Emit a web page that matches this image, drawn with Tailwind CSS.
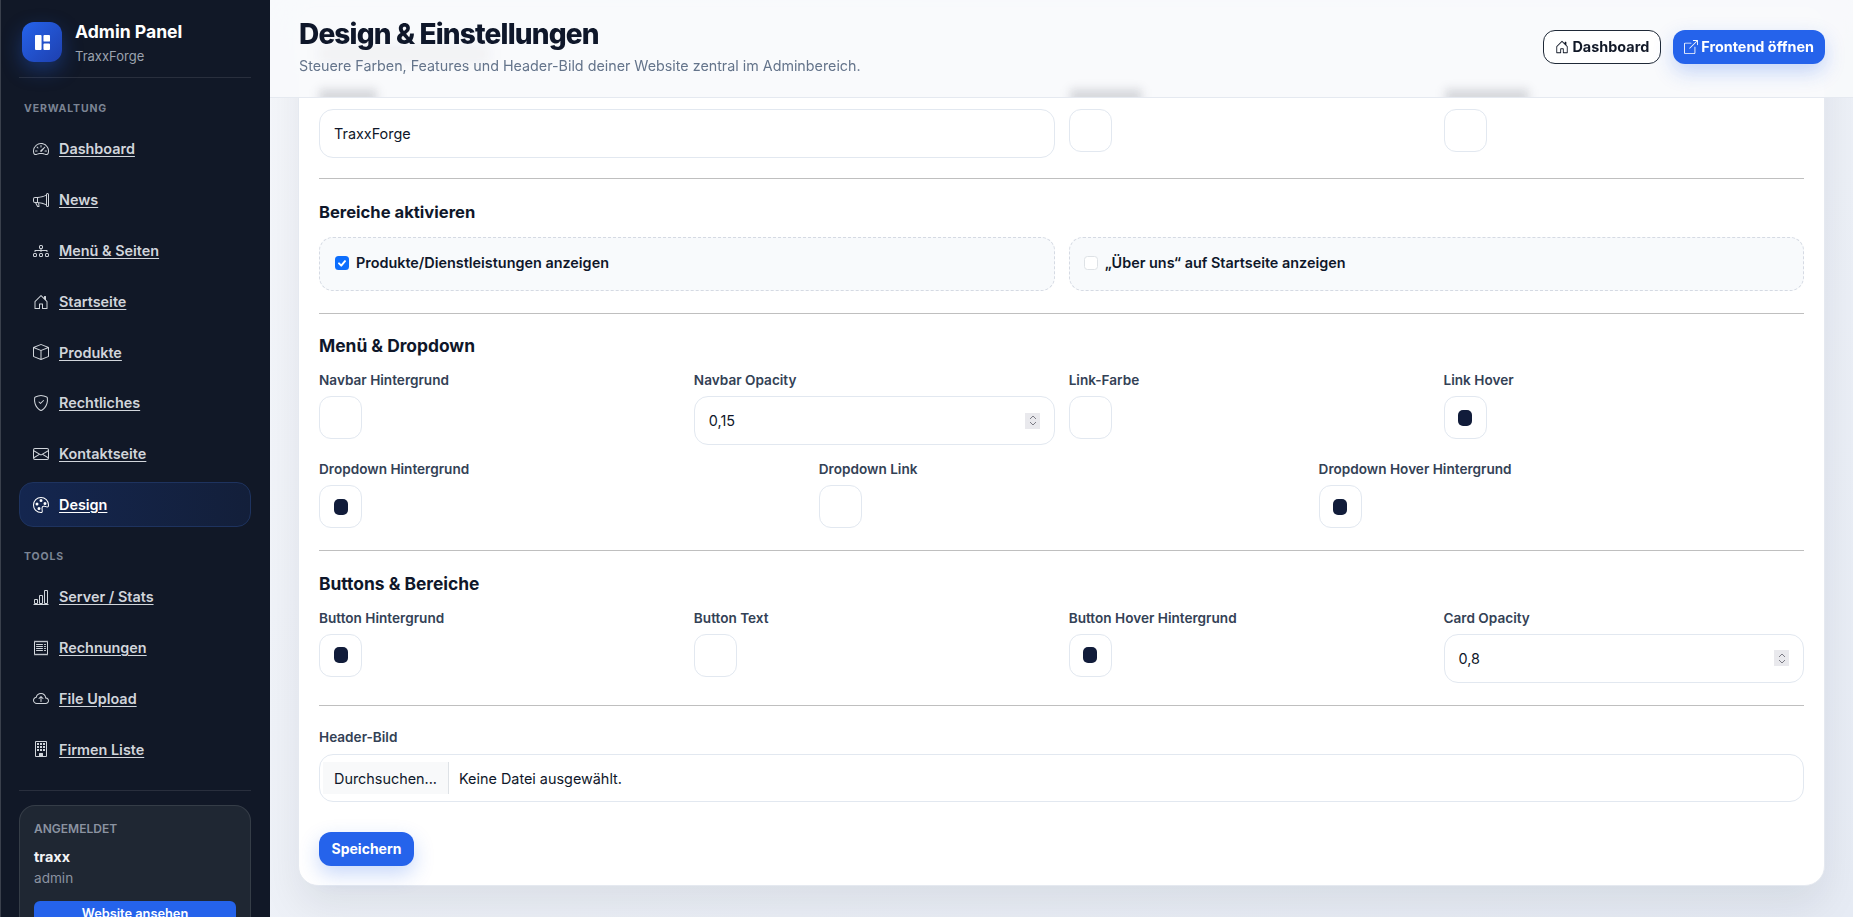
<!DOCTYPE html>
<html lang="de">
  <head>
    <meta charset="UTF-8" />
    <title>Design &amp; Einstellungen</title>
    <script src="https://cdn.jsdelivr.net/npm/@tailwindcss/browser@4"></script>
  </head>
  <body class="h-screen overflow-hidden flex bg-[#eef1f7] font-['Inter',sans-serif] text-[#0f172a]">
    <!-- Sidebar -->
    <aside class="w-[270px] shrink-0 h-screen overflow-hidden bg-[#111827] border-l border-l-[#3a404c] pl-[18px] pr-[19px] pt-[22px]">
      <div class="flex items-start gap-[13px] pl-[3px] h-[56px] border-b border-white/10">
        <div class="w-10 h-10 rounded-[12px] bg-gradient-to-br from-[#2563eb] to-[#1e40af] shadow-[0_8px_20px_rgba(37,99,235,0.35)] flex items-center justify-center text-white">
          <svg class="w-[15px] h-[15px]" viewBox="0 0 16 16" fill="currentColor"><path d="M0 1a1 1 0 0 1 1-1h5a1 1 0 0 1 1 1v14a1 1 0 0 1-1 1H1a1 1 0 0 1-1-1zm9 0a1 1 0 0 1 1-1h5a1 1 0 0 1 1 1v5a1 1 0 0 1-1 1h-5a1 1 0 0 1-1-1zm0 9a1 1 0 0 1 1-1h5a1 1 0 0 1 1 1v5a1 1 0 0 1-1 1h-5a1 1 0 0 1-1-1z"/></svg>
        </div>
        <div>
          <div class="text-[17.6px] leading-[20px] font-bold text-white">Admin Panel</div>
          <div class="text-[13px] leading-[16px] mt-[6px] text-[#9ca3af]">TraxxForge</div>
        </div>
      </div>

      <div class="mt-[23px] pl-[5px] text-[10.5px] leading-[16px] font-bold tracking-[0.08em] text-[#7b8494]">VERWALTUNG</div>
      <nav class="mt-[9.8px] flex flex-col gap-[6px] text-[14.4px] font-semibold text-[#d1d5db]">
        <a href="#" class="flex items-center gap-[10px] h-[44.8px] pl-[14px] underline underline-offset-2">
          <svg class="w-4 h-4 shrink-0" viewBox="0 0 16 16" fill="currentColor"><path d="M8 4a.5.5 0 0 1 .5.5V6a.5.5 0 0 1-1 0V4.5A.5.5 0 0 1 8 4M3.732 5.732a.5.5 0 0 1 .707 0l.915.914a.5.5 0 1 1-.708.708l-.914-.915a.5.5 0 0 1 0-.707M2 10a.5.5 0 0 1 .5-.5h1.586a.5.5 0 0 1 0 1H2.5A.5.5 0 0 1 2 10m9.5 0a.5.5 0 0 1 .5-.5h1.5a.5.5 0 0 1 0 1H12a.5.5 0 0 1-.5-.5m.754-4.246a.39.39 0 0 0-.527-.02L7.547 9.31a.91.91 0 1 0 1.302 1.258l3.434-4.297a.39.39 0 0 0-.029-.518z"/><path fill-rule="evenodd" d="M0 10a8 8 0 1 1 15.547 2.661c-.442 1.253-1.845 1.602-2.932 1.25C11.309 13.488 9.475 13 8 13c-1.474 0-3.31.488-4.615.911-1.087.352-2.49.003-2.932-1.25A8 8 0 0 1 0 10m8-7a7 7 0 0 0-6.603 9.329c.203.575.923.876 1.68.63C4.397 12.533 6.358 12 8 12s3.604.532 4.923.96c.757.245 1.477-.056 1.68-.631A7 7 0 0 0 8 3"/></svg>
          Dashboard
        </a>
        <a href="#" class="flex items-center gap-[10px] h-[44.8px] pl-[14px] underline underline-offset-2">
          <svg class="w-4 h-4 shrink-0" viewBox="0 0 16 16" fill="currentColor"><path d="M13 2.5a1.5 1.5 0 0 1 3 0v11a1.5 1.5 0 0 1-3 0v-.214c-2.162-1.241-4.49-1.843-6.912-2.083l.405 2.712A1 1 0 0 1 5.51 15.1h-.548a1 1 0 0 1-.916-.599l-1.85-3.49-.202-.003A2.014 2.014 0 0 1 0 9V7a2.02 2.02 0 0 1 1.992-2.013 75 75 0 0 0 2.483-.075c3.043-.154 6.148-.849 8.525-2.199zm1 0v11a.5.5 0 0 0 1 0v-11a.5.5 0 0 0-1 0m-1 1.35c-2.344 1.205-5.209 1.842-8 2.033v4.233q.27.015.537.036c2.568.189 5.093.744 7.463 1.993zm-9 6.215v-4.13a95 95 0 0 1-1.992.052A1.02 1.02 0 0 0 1 7v2c0 .55.448 1.002 1.006 1.009A61 61 0 0 1 4 10.065m-.657.975 1.609 3.037.01.024h.548l-.002-.014-.443-2.966a68 68 0 0 0-1.722-.082z"/></svg>
          News
        </a>
        <a href="#" class="flex items-center gap-[10px] h-[44.8px] pl-[14px] underline underline-offset-2">
          <svg class="w-4 h-4 shrink-0" viewBox="0 0 16 16" fill="currentColor"><path fill-rule="evenodd" d="M6 3.5A1.5 1.5 0 0 1 7.5 2h1A1.5 1.5 0 0 1 10 3.5v1A1.5 1.5 0 0 1 8.5 6v1H14a.5.5 0 0 1 .5.5v1a.5.5 0 0 1-1 0V8h-5v.5a.5.5 0 0 1-1 0V8h-5v.5a.5.5 0 0 1-1 0v-1A.5.5 0 0 1 2 7h5.5V6A1.5 1.5 0 0 1 6 4.5zM8.5 5a.5.5 0 0 0 .5-.5v-1a.5.5 0 0 0-.5-.5h-1a.5.5 0 0 0-.5.5v1a.5.5 0 0 0 .5.5zM0 11.5A1.5 1.5 0 0 1 1.5 10h1A1.5 1.5 0 0 1 4 11.5v1A1.5 1.5 0 0 1 2.5 14h-1A1.5 1.5 0 0 1 0 12.5zm1.5-.5a.5.5 0 0 0-.5.5v1a.5.5 0 0 0 .5.5h1a.5.5 0 0 0 .5-.5v-1a.5.5 0 0 0-.5-.5zm4.5.5A1.5 1.5 0 0 1 7.5 10h1a1.5 1.5 0 0 1 1.5 1.5v1A1.5 1.5 0 0 1 8.5 14h-1A1.5 1.5 0 0 1 6 12.5zm1.5-.5a.5.5 0 0 0-.5.5v1a.5.5 0 0 0 .5.5h1a.5.5 0 0 0 .5-.5v-1a.5.5 0 0 0-.5-.5zm4.5.5a1.5 1.5 0 0 1 1.5-1.5h1a1.5 1.5 0 0 1 1.5 1.5v1a1.5 1.5 0 0 1-1.5 1.5h-1a1.5 1.5 0 0 1-1.5-1.5zm1.5-.5a.5.5 0 0 0-.5.5v1a.5.5 0 0 0 .5.5h1a.5.5 0 0 0 .5-.5v-1a.5.5 0 0 0-.5-.5z"/></svg>
          Menü &amp; Seiten
        </a>
        <a href="#" class="flex items-center gap-[10px] h-[44.8px] pl-[14px] underline underline-offset-2">
          <svg class="w-4 h-4 shrink-0" viewBox="0 0 16 16" fill="currentColor"><path d="M8.354 1.146a.5.5 0 0 0-.708 0l-6 6A.5.5 0 0 0 1.5 7.5v7a.5.5 0 0 0 .5.5h4.5a.5.5 0 0 0 .5-.5v-4h2v4a.5.5 0 0 0 .5.5H14a.5.5 0 0 0 .5-.5v-7a.5.5 0 0 0-.146-.354L13 5.793V2.5a.5.5 0 0 0-.5-.5h-1a.5.5 0 0 0-.5.5v1.293zM2.5 14V7.707l5.5-5.5 5.5 5.5V14H10v-4a.5.5 0 0 0-.5-.5h-3a.5.5 0 0 0-.5.5v4z"/></svg>
          Startseite
        </a>
        <a href="#" class="flex items-center gap-[10px] h-[44.8px] pl-[14px] underline underline-offset-2">
          <svg class="w-4 h-4 shrink-0" viewBox="0 0 16 16" fill="currentColor"><path d="M8.186 1.113a.5.5 0 0 0-.372 0L1.846 3.5 8 5.961 14.154 3.5zM15 4.239l-6.5 2.6v7.922l6.5-2.6V4.24zM7.5 14.762V6.838L1 4.239v7.925zM7.443.184a1.5 1.5 0 0 1 1.114 0l7.129 2.852A.5.5 0 0 1 16 3.5v8.662a1 1 0 0 1-.629.928l-7.185 2.874a.5.5 0 0 1-.372 0L.63 13.09a1 1 0 0 1-.63-.928V3.5a.5.5 0 0 1 .314-.464z"/></svg>
          Produkte
        </a>
        <a href="#" class="flex items-center gap-[10px] h-[44.8px] pl-[14px] underline underline-offset-2">
          <svg class="w-4 h-4 shrink-0" viewBox="0 0 16 16" fill="currentColor"><path d="M5.338 1.59a61 61 0 0 0-2.837.856.48.48 0 0 0-.328.39c-.554 4.157.726 7.19 2.253 9.188a10.7 10.7 0 0 0 2.287 2.233c.346.244.652.42.893.533q.18.085.293.118a1 1 0 0 0 .101.025 1 1 0 0 0 .1-.025q.114-.034.294-.118c.24-.113.547-.29.893-.533a10.7 10.7 0 0 0 2.287-2.233c1.527-1.997 2.807-5.031 2.253-9.188a.48.48 0 0 0-.328-.39c-.651-.213-1.75-.56-2.837-.855C9.552 1.29 8.531 1.067 8 1.067c-.53 0-1.552.223-2.662.524zM5.072.56C6.157.265 7.31 0 8 0s1.843.265 2.928.56c1.11.3 2.229.655 2.887.87a1.54 1.54 0 0 1 1.044 1.262c.596 4.477-.787 7.795-2.465 9.99a11.8 11.8 0 0 1-2.517 2.453 7 7 0 0 1-1.048.625c-.28.132-.581.24-.829.24s-.548-.108-.829-.24a7 7 0 0 1-1.048-.625 11.8 11.8 0 0 1-2.517-2.453C1.928 10.487.545 7.169 1.141 2.692A1.54 1.54 0 0 1 2.185 1.43 63 63 0 0 1 5.072.56"/><path d="M10.854 5.146a.5.5 0 0 1 0 .708l-3 3a.5.5 0 0 1-.708 0l-1.5-1.5a.5.5 0 1 1 .708-.708L7.5 7.793l2.646-2.647a.5.5 0 0 1 .708 0"/></svg>
          Rechtliches
        </a>
        <a href="#" class="flex items-center gap-[10px] h-[44.8px] pl-[14px] underline underline-offset-2">
          <svg class="w-4 h-4 shrink-0" viewBox="0 0 16 16" fill="currentColor"><path d="M0 4a2 2 0 0 1 2-2h12a2 2 0 0 1 2 2v8a2 2 0 0 1-2 2H2a2 2 0 0 1-2-2zm2-1a1 1 0 0 0-1 1v.217l7 4.2 7-4.2V4a1 1 0 0 0-1-1zm13 2.383-4.708 2.825L15 11.105zm-.034 6.876-5.64-3.471L8 9.583l-1.326-.795-5.64 3.47A1 1 0 0 0 2 13h12a1 1 0 0 0 .966-.741M1 11.105l4.708-2.897L1 5.383z"/></svg>
          Kontaktseite
        </a>
        <a href="#" class="flex items-center gap-[10px] h-[44.8px] pl-[13px] underline underline-offset-2 text-white rounded-[14px] border border-[#1e335f] bg-gradient-to-r from-[#14264f] to-[#131f3a]">
          <svg class="w-4 h-4 shrink-0" viewBox="0 0 16 16" fill="currentColor"><path d="M8 5a1.5 1.5 0 1 0 0-3 1.5 1.5 0 0 0 0 3m4 3a1.5 1.5 0 1 0 0-3 1.5 1.5 0 0 0 0 3M5.5 7a1.5 1.5 0 1 1-3 0 1.5 1.5 0 0 1 3 0m.5 6a1.5 1.5 0 1 0 0-3 1.5 1.5 0 0 0 0 3"/><path d="M16 8c0 3.15-1.866 2.585-3.567 2.07C11.42 9.763 10.465 9.473 10 10c-.603.683-.475 1.819-.351 2.92C9.826 14.495 9.996 16 8 16a8 8 0 1 1 8-8m-8 7c.611 0 .654-.171.655-.176.078-.146.124-.464.07-1.119-.014-.168-.037-.37-.061-.591-.052-.464-.112-1.005-.118-1.462-.01-.707.083-1.61.704-2.314.369-.417.845-.578 1.272-.618.404-.038.812.026 1.16.104.343.077.702.186 1.025.284l.028.008c.346.105.658.199.953.266.653.148.904.083.991.024C14.717 9.38 15 9.161 15 8a7 7 0 1 0-7 7"/></svg>
          Design
        </a>
      </nav>

      <div class="mt-[21.5px] pl-[5px] text-[10.5px] leading-[16px] font-bold tracking-[0.08em] text-[#7b8494]">TOOLS</div>
      <nav class="mt-[10px] flex flex-col gap-[6px] text-[14.4px] font-semibold text-[#d1d5db]">
        <a href="#" class="flex items-center gap-[10px] h-[44.8px] pl-[14px] underline underline-offset-2">
          <svg class="w-4 h-4 shrink-0" viewBox="0 0 16 16" fill="currentColor"><path d="M4 11H2v3h2zm5-4H7v7h2zm5-5v12h-2V2zm-2-1a1 1 0 0 0-1 1v12a1 1 0 0 0 1 1h2a1 1 0 0 0 1-1V2a1 1 0 0 0-1-1zM6 7a1 1 0 0 1 1-1h2a1 1 0 0 1 1 1v7a1 1 0 0 1-1 1H7a1 1 0 0 1-1-1zm-5 4a1 1 0 0 1 1-1h2a1 1 0 0 1 1 1v3a1 1 0 0 1-1 1H2a1 1 0 0 1-1-1z"/><path d="M.5 15h15v1H.5z"/></svg>
          Server / Stats
        </a>
        <a href="#" class="flex items-center gap-[10px] h-[44.8px] pl-[14px] underline underline-offset-2">
          <svg class="w-4 h-4 shrink-0" viewBox="0 0 16 16" fill="currentColor"><path d="M1.92.506a.5.5 0 0 1 .434.14L3 1.293l.646-.647a.5.5 0 0 1 .708 0L5 1.293l.646-.647a.5.5 0 0 1 .708 0L7 1.293l.646-.647a.5.5 0 0 1 .708 0L9 1.293l.646-.647a.5.5 0 0 1 .708 0l.646.647.646-.647a.5.5 0 0 1 .708 0l.646.647.646-.647a.5.5 0 0 1 .801.13l.5 1A.5.5 0 0 1 15 2v12a.5.5 0 0 1-.053.224l-.5 1a.5.5 0 0 1-.8.13L13 14.707l-.646.647a.5.5 0 0 1-.708 0L11 14.707l-.646.647a.5.5 0 0 1-.708 0L9 14.707l-.646.647a.5.5 0 0 1-.708 0L7 14.707l-.646.647a.5.5 0 0 1-.708 0L5 14.707l-.646.647a.5.5 0 0 1-.708 0L3 14.707l-.646.647a.5.5 0 0 1-.801-.13l-.5-1A.5.5 0 0 1 1 14V2a.5.5 0 0 1 .053-.224l.5-1a.5.5 0 0 1 .367-.27m.217 1.338L2 2.118v11.764l.137.274.51-.51a.5.5 0 0 1 .707 0l.646.647.646-.646a.5.5 0 0 1 .708 0l.646.646.646-.646a.5.5 0 0 1 .708 0l.646.646.646-.646a.5.5 0 0 1 .708 0l.646.646.646-.646a.5.5 0 0 1 .708 0l.646.646.646-.646a.5.5 0 0 1 .708 0l.509.509.137-.274V2.118l-.137-.274-.51.51a.5.5 0 0 1-.707 0L12 1.707l-.646.647a.5.5 0 0 1-.708 0L10 1.707l-.646.647a.5.5 0 0 1-.708 0L8 1.707l-.646.647a.5.5 0 0 1-.708 0L6 1.707l-.646.647a.5.5 0 0 1-.708 0L4 1.707l-.646.647a.5.5 0 0 1-.708 0z"/><path d="M3 4.5a.5.5 0 0 1 .5-.5h6a.5.5 0 1 1 0 1h-6a.5.5 0 0 1-.5-.5m0 2a.5.5 0 0 1 .5-.5h6a.5.5 0 1 1 0 1h-6a.5.5 0 0 1-.5-.5m0 2a.5.5 0 0 1 .5-.5h6a.5.5 0 1 1 0 1h-6a.5.5 0 0 1-.5-.5m0 2a.5.5 0 0 1 .5-.5h6a.5.5 0 0 1 0 1h-6a.5.5 0 0 1-.5-.5m8-6a.5.5 0 0 1 .5-.5h1a.5.5 0 0 1 0 1h-1a.5.5 0 0 1-.5-.5m0 2a.5.5 0 0 1 .5-.5h1a.5.5 0 0 1 0 1h-1a.5.5 0 0 1-.5-.5m0 2a.5.5 0 0 1 .5-.5h1a.5.5 0 0 1 0 1h-1a.5.5 0 0 1-.5-.5m0 2a.5.5 0 0 1 .5-.5h1a.5.5 0 0 1 0 1h-1a.5.5 0 0 1-.5-.5"/></svg>
          Rechnungen
        </a>
        <a href="#" class="flex items-center gap-[10px] h-[44.8px] pl-[14px] underline underline-offset-2">
          <svg class="w-4 h-4 shrink-0" viewBox="0 0 16 16" fill="currentColor"><path fill-rule="evenodd" d="M7.646 5.146a.5.5 0 0 1 .708 0l2 2a.5.5 0 0 1-.708.708L8.5 6.707V10.5a.5.5 0 0 1-1 0V6.707L6.354 7.854a.5.5 0 1 1-.708-.708z"/><path d="M4.406 3.342A5.53 5.53 0 0 1 8 2c2.69 0 4.923 2 5.166 4.579C14.758 6.804 16 8.137 16 9.773 16 11.569 14.502 13 12.687 13H3.781C1.708 13 0 11.366 0 9.318c0-1.763 1.266-3.223 2.942-3.593.143-.863.698-1.723 1.464-2.383m.653.757c-.757.653-1.153 1.44-1.153 2.056v.448l-.445.049C2.064 6.805 1 7.952 1 9.318 1 10.785 2.23 12 3.781 12h8.906C13.98 12 15 10.988 15 9.773c0-1.216-1.02-2.228-2.313-2.228h-.5v-.5C12.188 4.825 10.328 3 8 3a4.53 4.53 0 0 0-2.941 1.1z"/></svg>
          File Upload
        </a>
        <a href="#" class="flex items-center gap-[10px] h-[44.8px] pl-[14px] underline underline-offset-2">
          <svg class="w-4 h-4 shrink-0" viewBox="0 0 16 16" fill="currentColor"><path d="M2 1a1 1 0 0 1 1-1h10a1 1 0 0 1 1 1v14a1 1 0 0 1-1 1H3a1 1 0 0 1-1-1zm11 0H3v14h3v-2.5a.5.5 0 0 1 .5-.5h3a.5.5 0 0 1 .5.5V15h3z"/><path d="M4 2h2v2H4zm3 0h2v2H7zm3 0h2v2h-2zM4 5h2v2H4zm3 0h2v2H7zm3 0h2v2h-2zM4 8h2v2H4zm3 0h2v2H7zm3 0h2v2h-2z"/></svg>
          Firmen Liste
        </a>
      </nav>

      <div class="mt-[17.9px] pt-[14px] border-t border-white/10">
        <div class="rounded-[16px] border border-white/10 bg-[#1f2733] px-[14px] pt-[14px] h-[130px]">
          <div class="text-[12px] leading-[18px] font-semibold text-[#8b93a1]">ANGEMELDET</div>
          <div class="mt-[10px] text-[14.4px] leading-[18px] font-bold text-[#f3f4f6]">traxx</div>
          <div class="mt-[3px] text-[13.6px] leading-[18px] text-[#8b93a1]">admin</div>
          <a href="#" class="mt-[14px] block rounded-[6px] bg-[#2563eb] h-[36px] leading-[26px] text-center text-[12.8px] font-semibold text-white">Website ansehen</a>
        </div>
      </div>
    </aside>

    <!-- Main -->
    <main class="relative flex-1 h-screen overflow-hidden bg-gradient-to-br from-[#f5f7fb] to-[#e6ebf4] px-7">
      <!-- Scrolled sticky header, content blurs beneath it -->
      <header class="absolute z-10 top-0 inset-x-0 h-[98px] bg-[#f8fafc]/90 backdrop-blur-lg border-b border-[#e5e9f0] pl-[29px] pr-7 flex items-center justify-between">
        <!-- blurred shadow of the scrolled labels -->
        <div aria-hidden="true" class="absolute inset-0 overflow-hidden -z-10">
          <div class="absolute left-[49px] top-[48px] w-[170px] h-[12px] bg-[#0f172a]/6 blur-[7px]"></div>
          <div class="absolute left-[49px] top-[89px] w-[58px] h-[16px] bg-[#0f172a]/15 blur-[5px]"></div>
          <div class="absolute left-[800px] top-[89px] w-[72px] h-[16px] bg-[#0f172a]/15 blur-[5px]"></div>
          <div class="absolute left-[1175px] top-[89px] w-[84px] h-[16px] bg-[#0f172a]/15 blur-[5px]"></div>
        </div>
        <div class="-mt-[4px]">
          <h1 class="text-[28px] leading-[34px] font-extrabold tracking-[-0.03em] text-[#0f172a]">Design &amp; Einstellungen</h1>
          <p class="mt-[5px] text-[14.3px] leading-[20px] text-[#64748b]">Steuere Farben, Features und Header-Bild deiner Website zentral im Adminbereich.</p>
        </div>
        <div class="flex items-center gap-3 -mt-[3px]">
          <a href="#" class="flex items-center gap-[3px] h-[34px] px-[11px] rounded-[12px] border border-[#1f2937] bg-white text-[14.4px] font-bold text-[#111827]">
            <svg class="w-[14px] h-[14px]" viewBox="0 0 16 16" fill="currentColor"><path d="M8.354 1.146a.5.5 0 0 0-.708 0l-6 6A.5.5 0 0 0 1.5 7.5v7a.5.5 0 0 0 .5.5h4.5a.5.5 0 0 0 .5-.5v-4h2v4a.5.5 0 0 0 .5.5H14a.5.5 0 0 0 .5-.5v-7a.5.5 0 0 0-.146-.354L13 5.793V2.5a.5.5 0 0 0-.5-.5h-1a.5.5 0 0 0-.5.5v1.293zM2.5 14V7.707l5.5-5.5 5.5 5.5V14H10v-4a.5.5 0 0 0-.5-.5h-3a.5.5 0 0 0-.5.5v4z"/></svg>
            Dashboard
          </a>
          <a href="#" class="flex items-center gap-[3px] h-[34px] px-[11px] rounded-[12px] bg-[#2563eb] shadow-[0_8px_20px_rgba(37,99,235,0.25)] text-[14.4px] font-bold text-white">
            <svg class="w-[14px] h-[14px]" viewBox="0 0 16 16" fill="currentColor"><path d="M8.636 3.5a.5.5 0 0 0-.5-.5H1.5A1.5 1.5 0 0 0 0 4.5v10A1.5 1.5 0 0 0 1.5 16h10a1.5 1.5 0 0 0 1.5-1.5V7.864a.5.5 0 0 0-1 0V14.5a.5.5 0 0 1-.5.5h-10a.5.5 0 0 1-.5-.5v-10a.5.5 0 0 1 .5-.5h6.636a.5.5 0 0 0 .5-.5"/><path d="M16 .5a.5.5 0 0 0-.5-.5h-5a.5.5 0 0 0 0 1h3.793L6.146 9.146a.5.5 0 1 0 .708.708L15 1.707V5.5a.5.5 0 0 0 1 0z"/></svg>
            Frontend öffnen
          </a>
        </div>
      </header>

      <!-- Card -->
      <div class="mt-[6px] bg-white rounded-[20px] border border-[#e5e9f0] shadow-[0_20px_40px_rgba(15,23,42,0.08)] px-5 pb-[19px] pt-[102px]">
        <div class="grid grid-cols-12 gap-x-[14.4px]">
          <div class="col-span-6">
            <div class="w-[calc(100%+1px)] h-[48.5px] rounded-[14px] border border-[#e2e8f0] flex items-center px-[14px] pt-[1px] text-[14.4px]">TraxxForge</div>
          </div>
          <div class="col-span-3">
            <div class="w-[43px] h-[42.7px] rounded-[12px] border border-[#e2e8f0]"></div>
          </div>
          <div class="col-span-3">
            <div class="w-[43px] h-[42.7px] rounded-[12px] border border-[#e2e8f0]"></div>
          </div>
        </div>

        <hr class="mt-[20.6px] mb-[21.6px] border-black/25" />

        <h2 class="text-[16.6px] leading-[22px] font-bold">Bereiche aktivieren</h2>
        <div class="mt-[14px] grid grid-cols-2 gap-x-[14.4px]">
          <label class="w-[calc(100%+1px)] h-[54.5px] rounded-[14px] border border-dashed border-[#d5dae3] bg-[#f8fafc] flex items-center gap-[7px] px-[15px] pb-[2px] text-[14.4px] font-semibold">
            <span class="w-[14px] h-[14px] rounded-[3.5px] bg-[#0d6efd] flex items-center justify-center text-white">
              <svg class="w-[12px] h-[12px]" viewBox="0 0 16 16" fill="none" stroke="currentColor" stroke-width="2.6" stroke-linecap="round" stroke-linejoin="round"><path d="M4 8.5l3 3 5-6"/></svg>
            </span>
            Produkte/Dienstleistungen anzeigen
          </label>
          <label class="h-[54.5px] rounded-[14px] border border-dashed border-[#d5dae3] bg-[#f8fafc] flex items-center gap-[7px] px-[14px] pb-[2px] text-[14.4px] font-semibold">
            <span class="w-[14px] h-[14px] rounded-[3.5px] bg-white border border-[#dee2e6]"></span>
            „Über uns“ auf Startseite anzeigen
          </label>
        </div>

        <hr class="my-[21.6px] border-black/25" />

        <h2 class="text-[17.4px] leading-[22px] font-bold">Menü &amp; Dropdown</h2>
        <div class="mt-[13px] grid grid-cols-12 gap-x-[14.4px] gap-y-[14.4px] text-[13.6px] font-semibold text-[#334155]">
          <div class="col-span-3">
            <div class="leading-[20.4px] mb-[5.6px]">Navbar Hintergrund</div>
            <div class="w-[43px] h-[42.7px] rounded-[12px] border border-[#e2e8f0]"></div>
          </div>
          <div class="col-span-3">
            <div class="leading-[20.4px] mb-[5.6px]">Navbar Opacity</div>
            <div class="w-[calc(100%+1px)] h-[48.5px] rounded-[14px] border border-[#e2e8f0] flex items-center justify-between pl-[14px] pr-[14px] text-[14.4px] font-normal text-[#0f172a]">
              0,15
              <span class="w-[15px] h-[16px] bg-[#e9e9ed] flex flex-col items-center justify-center gap-[1px] text-[#71717a]">
                <svg class="w-[8px] h-[5px]" viewBox="0 0 8 5" fill="none" stroke="currentColor" stroke-width="0.9"><path d="M1 4l3-3 3 3"/></svg>
                <svg class="w-[8px] h-[5px]" viewBox="0 0 8 5" fill="none" stroke="currentColor" stroke-width="0.9"><path d="M1 1l3 3 3-3"/></svg>
              </span>
            </div>
          </div>
          <div class="col-span-3">
            <div class="leading-[20.4px] mb-[5.6px]">Link-Farbe</div>
            <div class="w-[43px] h-[42.7px] rounded-[12px] border border-[#e2e8f0]"></div>
          </div>
          <div class="col-span-3">
            <div class="leading-[20.4px] mb-[5.6px]">Link Hover</div>
            <div class="w-[43px] h-[42.7px] rounded-[12px] border border-[#e2e8f0] flex items-center justify-center"><span class="w-[14px] h-[16px] rounded-[5px] bg-[#111c3a]"></span></div>
          </div>
          <div class="col-span-4">
            <div class="leading-[20.4px] mb-[5.6px]">Dropdown Hintergrund</div>
            <div class="w-[43px] h-[42.7px] rounded-[12px] border border-[#e2e8f0] flex items-center justify-center"><span class="w-[14px] h-[16px] rounded-[5px] bg-[#111c3a]"></span></div>
          </div>
          <div class="col-span-4">
            <div class="leading-[20.4px] mb-[5.6px]">Dropdown Link</div>
            <div class="w-[43px] h-[42.7px] rounded-[12px] border border-[#e2e8f0]"></div>
          </div>
          <div class="col-span-4">
            <div class="leading-[20.4px] mb-[5.6px]">Dropdown Hover Hintergrund</div>
            <div class="w-[43px] h-[42.7px] rounded-[12px] border border-[#e2e8f0] flex items-center justify-center"><span class="w-[14px] h-[16px] rounded-[5px] bg-[#111c3a]"></span></div>
          </div>
        </div>

        <hr class="my-[21.6px] border-black/25" />

        <h2 class="text-[17.4px] leading-[24px] font-bold">Buttons &amp; Bereiche</h2>
        <div class="mt-[12px] grid grid-cols-12 gap-x-[14.4px] text-[13.6px] font-semibold text-[#334155]">
          <div class="col-span-3">
            <div class="leading-[20.4px] mb-[5.6px]">Button Hintergrund</div>
            <div class="w-[43px] h-[42.7px] rounded-[12px] border border-[#e2e8f0] flex items-center justify-center"><span class="w-[14px] h-[16px] rounded-[5px] bg-[#111c3a]"></span></div>
          </div>
          <div class="col-span-3">
            <div class="leading-[20.4px] mb-[5.6px]">Button Text</div>
            <div class="w-[43px] h-[42.7px] rounded-[12px] border border-[#e2e8f0]"></div>
          </div>
          <div class="col-span-3">
            <div class="leading-[20.4px] mb-[5.6px]">Button Hover Hintergrund</div>
            <div class="w-[43px] h-[42.7px] rounded-[12px] border border-[#e2e8f0] flex items-center justify-center"><span class="w-[14px] h-[16px] rounded-[5px] bg-[#111c3a]"></span></div>
          </div>
          <div class="col-span-3">
            <div class="leading-[20.4px] mb-[5.6px]">Card Opacity</div>
            <div class="h-[48.5px] rounded-[14px] border border-[#e2e8f0] flex items-center justify-between pl-[14px] pr-[14px] text-[14.4px] font-normal text-[#0f172a]">
              0,8
              <span class="w-[15px] h-[16px] bg-[#e9e9ed] flex flex-col items-center justify-center gap-[1px] text-[#71717a]">
                <svg class="w-[8px] h-[5px]" viewBox="0 0 8 5" fill="none" stroke="currentColor" stroke-width="0.9"><path d="M1 4l3-3 3 3"/></svg>
                <svg class="w-[8px] h-[5px]" viewBox="0 0 8 5" fill="none" stroke="currentColor" stroke-width="0.9"><path d="M1 1l3 3 3-3"/></svg>
              </span>
            </div>
          </div>
        </div>

        <hr class="mt-[22.6px] mb-[20.6px] border-black/25" />

        <div class="text-[13.6px] font-semibold text-[#334155] leading-[20.4px] mb-[6.6px]">Header-Bild</div>
        <div class="h-[48px] rounded-[14px] border border-[#e2e8f0] flex items-center pl-[3px] text-[14.4px] text-[#0f172a]">
          <span class="h-[32px] w-[126px] bg-[#f8f9fa] border-r border-[#dee2e6] flex items-center justify-center pt-[1px]">Durchsuchen...</span>
          <span class="ml-[10px] pt-[1px]">Keine Datei ausgewählt.</span>
        </div>

        <button class="mt-[30px] block h-[34px] w-[95px] rounded-[12px] bg-[#2563eb] shadow-[0_8px_20px_rgba(37,99,235,0.25)] text-[14px] font-bold text-white">Speichern</button>
      </div>
    </main>
  </body>
</html>
